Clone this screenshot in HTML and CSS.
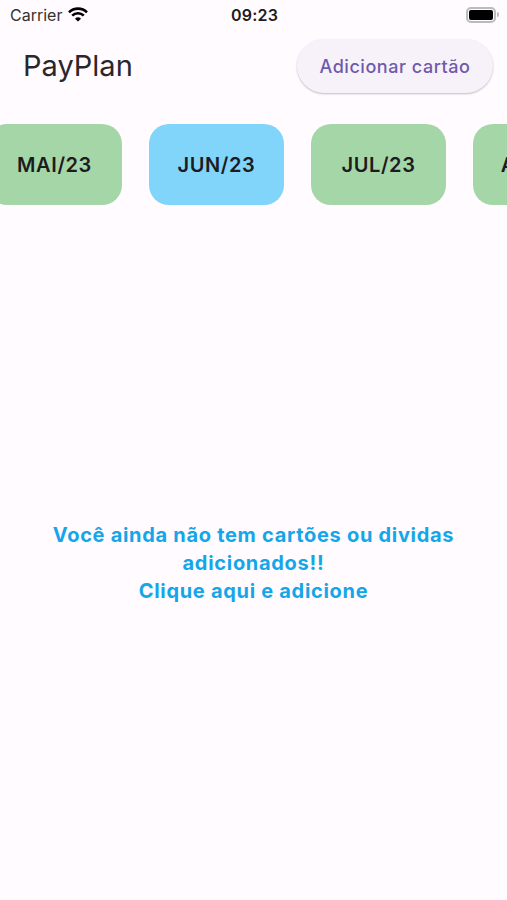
FILE: index.html
```html
<!DOCTYPE html>
<html lang="pt-BR">

<head>
    <meta charset="UTF-8" />
    <title>PayPlan</title>
    <link rel="stylesheet" href="styles.css">
</head>

<body>

    <div class="status-bar">
        <div class="carrier">
            <span>Carrier</span>
            <svg class="wifi" viewBox="0 0 20 15" width="20" height="15">
                <path d="M1 5.3 A12.8 12.8 0 0 1 19 5.3" />
                <path d="M4.2 8.7 A8.2 8.2 0 0 1 15.8 8.7" />
                <path class="dot" d="M10 14.6 L7 11.7 A4.3 4.3 0 0 1 13 11.7 Z" />
            </svg>
        </div>
        <div class="time">09:23</div>
        <div class="battery">
            <div class="battery-body"></div>
            <div class="battery-tip"></div>
        </div>
    </div>

    <header class="app-bar">
        <h1>PayPlan</h1>
        <button class="add-card">Adicionar cartão</button>
    </header>

    <div class="months">
        <button class="month">MAI/23</button>
        <button class="month selected">JUN/23</button>
        <button class="month">JUL/23</button>
        <button class="month">AGO/23</button>
    </div>

    <main class="empty">
        <p>Você ainda não tem cartões ou dividas<br>adicionados!!<br>Clique aqui e adicione</p>
    </main>

</body>

</html>
```
FILE: styles.css
```css
body {
    margin: 0;
    height: 900px;
    background-color: #fffbff;
    color: #1d1b20;
    font-family: Inter, sans-serif;
    display: flex;
    flex-direction: column;
    overflow: hidden;
}

.status-bar {
    height: 29px;
    display: grid;
    grid-template-columns: 1fr auto 1fr;
    align-items: center;
    padding: 0 8px 0 10px;
    font-size: 16px;
}

.carrier {
    display: flex;
    align-items: center;
    gap: 6px;
    color: #333;
}

.wifi {
    fill: none;
    stroke: #000;
    stroke-width: 2.6;
}

.wifi .dot {
    fill: #000;
    stroke: none;
}

.time {
    font-weight: 600;
    letter-spacing: 0.2px;
}

.battery {
    display: flex;
    align-items: center;
    justify-content: flex-end;
    gap: 1px;
}

.battery-body {
    box-sizing: border-box;
    width: 30px;
    height: 16px;
    border: 2px solid #bbb;
    border-radius: 5px;
    background: #000;
    background-clip: content-box;
    padding: 1px;
}

.battery-tip {
    width: 2px;
    height: 5px;
    border-radius: 0 2px 2px 0;
    background: #bbb;
}

.app-bar {
    display: flex;
    align-items: center;
    justify-content: space-between;
    height: 73px;
    padding: 0 14px 0 23px;
}

h1 {
    margin: 0;
    color: #29272c;
    font-size: 29px;
    font-weight: 400;
}

button {
    border: none;
    font-family: inherit;
    cursor: pointer;
}

.add-card {
    width: 196px;
    height: 54px;
    padding: 1px 0 0;
    border-radius: 27px;
    background-color: #f7f2fa;
    color: #6f5aa9;
    font-size: 18px;
    font-weight: 500;
    letter-spacing: 0.55px;
    box-shadow: 0 1px 2px rgba(0, 0, 0, 0.25);
}

.months {
    display: flex;
    gap: 27px;
    margin: 22px 0 0 -13px;
}

.month {
    flex: 0 0 135px;
    height: 81px;
    padding: 0;
    border-radius: 20px;
    background-color: #a5d6a7;
    color: #1d1b20;
    font-size: 20px;
    font-weight: 600;
    letter-spacing: 0.6px;
}

.month.selected {
    background-color: #81d4fa;
}

.empty {
    flex: 1;
    display: flex;
    align-items: center;
    justify-content: center;
    padding-top: 21px;
    text-align: center;
}

.empty p {
    margin: 0;
    color: #14a6e8;
    font-size: 20px;
    font-weight: 700;
    line-height: 28.3px;
    letter-spacing: 0.7px;
}
```
